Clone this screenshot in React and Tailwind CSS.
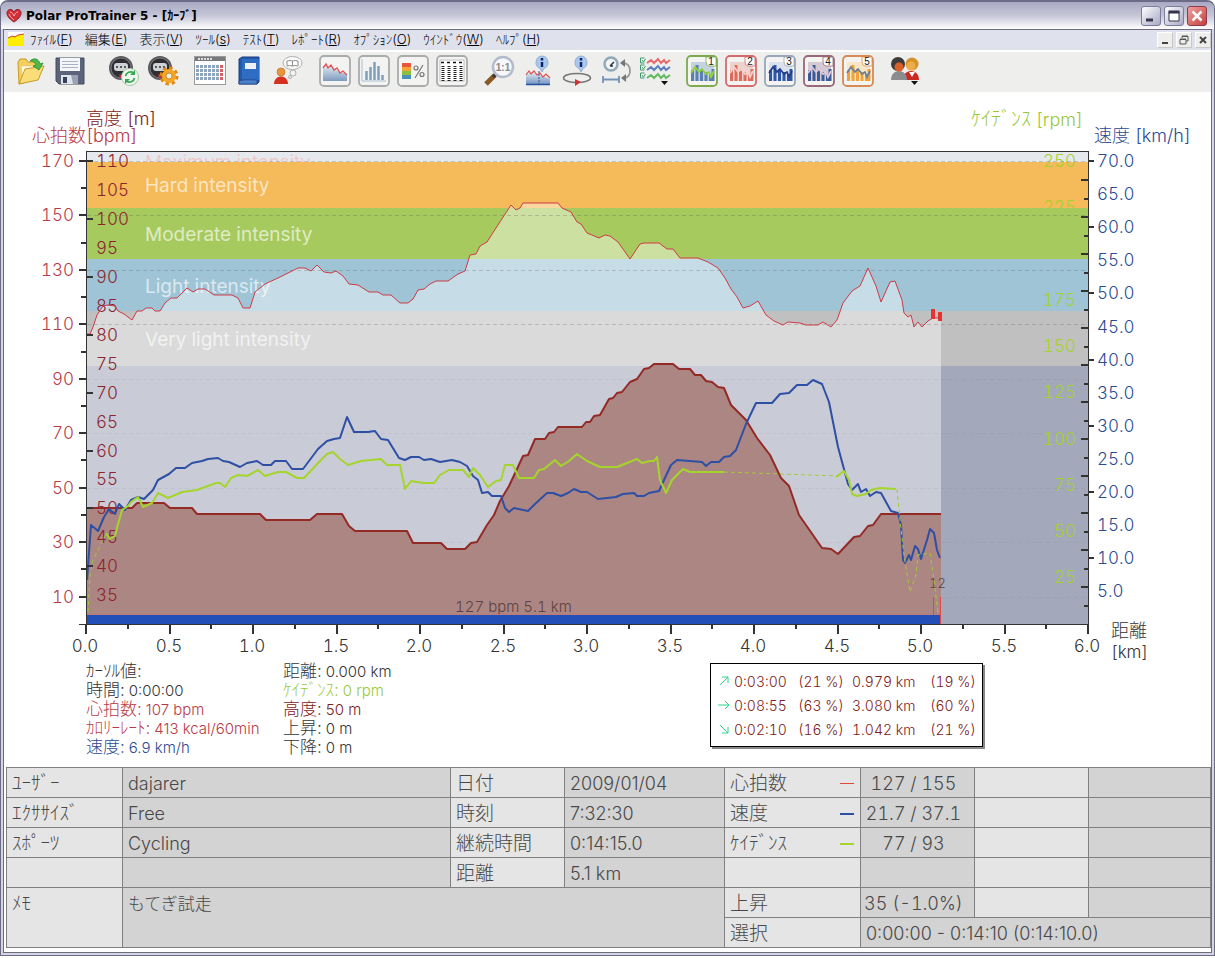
import { useId } from "react";

const menuItems = [
  { label: "ﾌｧｲﾙ", hotkey: "F" },
  { label: "編集", hotkey: "E" },
  { label: "表示", hotkey: "V" },
  { label: "ﾂｰﾙ", hotkey: "s" },
  { label: "ﾃｽﾄ", hotkey: "T" },
  { label: "ﾚﾎﾟｰﾄ", hotkey: "R" },
  { label: "ｵﾌﾟｼｮﾝ", hotkey: "O" },
  { label: "ｳｲﾝﾄﾞｳ", hotkey: "W" },
  { label: "ﾍﾙﾌﾟ", hotkey: "H" },
];

/* ---------- toolbar icons ---------- */

const OpenIcon = () => (
  <svg viewBox="0 0 32 32" className="w-8 h-8">
    <path d="M3 7l2-3h6l2 3h10v5l-14 16-5 1z" fill="#f3cf5c" stroke="#c79a26" />
    <path d="M6 11h17v8l-15 9z" fill="#fffbe6" stroke="#d9c47c" strokeWidth=".7" />
    <path d="M10 14l19-3-6 14L4 29z" fill="#f9dd78" stroke="#c79a26" />
    <path d="M15 6c4-4 9-2 10 3l3-1-4 7-6-4 3-1c-1-3-3-4-6-4z" fill="#4fb848" stroke="#2b8a2b" strokeWidth=".8" />
  </svg>
);

const SaveIcon = () => (
  <svg viewBox="0 0 32 32" className="w-8 h-8">
    <path d="M2 3h28v26H5l-3-3z" fill="#5b6478" stroke="#454d60" />
    <path d="M6 3h20v13H6z" fill="#f4f6fa" />
    <path d="M8 6.500h16M8 9.500h16M8 12.500h16" stroke="#a9b2c4" />
    <path d="M7 20h17v9H7z" fill="#dfe3ea" />
    <path d="M9 22h4v6H9z" fill="#39415a" />
    <path d="M17 20h7v9h-5z" fill="#9aa3b5" />
  </svg>
);

const WatchBase = () => (
  <>
    <circle cx="13" cy="13" r="12" fill="#5a5a5e" />
    <circle cx="13" cy="13" r="10" fill="#2f2f33" stroke="#77777c" />
    <rect x="6" y="8" width="14" height="8" rx="3" fill="#cfd3d6" />
    <path d="M8 12h2M12 12h2M16 12h2" stroke="#55595c" strokeWidth="2" />
    <path d="M11 19l6 3-5 1z" fill="#d03030" />
  </>
);

const WatchSyncIcon = () => (
  <svg viewBox="0 0 32 32" className="w-8 h-8">
    <WatchBase />
    <circle cx="22" cy="22" r="8.500" fill="#eef6ef" stroke="#a7c7ad" />
    <path d="M17.500 21a5 5 0 0 1 8-3" fill="none" stroke="#34a853" strokeWidth="1.800" />
    <path d="M27 15v5h-5z" fill="#34a853" />
    <path d="M26.500 23a5 5 0 0 1-8 3" fill="none" stroke="#34a853" strokeWidth="1.800" />
    <path d="M17 29v-5h5z" fill="#34a853" />
  </svg>
);

const WatchSettingsIcon = () => (
  <svg viewBox="0 0 32 32" className="w-8 h-8">
    <WatchBase />
    <circle cx="22" cy="21" r="7.500" fill="none" stroke="#e08a10" strokeWidth="4" strokeDasharray="3.200 2.690" />
    <circle cx="22" cy="21" r="5" fill="none" stroke="#f5a623" strokeWidth="4" />
    <circle cx="22" cy="21" r="3" fill="#efefed" stroke="#c77a0c" strokeWidth=".8" />
  </svg>
);

const calendarRows = [12, 16, 20, 24];
const calendarCols = [4, 8, 12, 16, 20, 24, 28];

const CalendarIcon = () => (
  <svg viewBox="0 0 32 32" className="w-8 h-8">
    <rect x=".5" y="1.500" width="31" height="28" fill="#fff" stroke="#9a9a9a" />
    <rect x="1" y="2" width="30" height="4" fill="#77797d" />
    <path d="M4 4h14" stroke="#fff" strokeWidth="1.500" strokeDasharray="2 1" />
    {calendarRows.map((y) =>
      calendarCols.map((x) => (
        <rect key={`${x}-${y}`} x={x - 2} y={y - 2} width="3" height="3" fill={x === 28 ? "#d96060" : "#8ea5be"} />
      ))
    )}
  </svg>
);

const BookIcon = () => (
  <svg viewBox="0 0 32 32" className="w-8 h-8">
    <path d="M6 4l3-2h17v25l-2 2H6z" fill="#2458a8" stroke="#1a3f80" />
    <path d="M9 4h17v21H9z" fill="#2f6cc4" />
    <path d="M6 26c4-2 12-1 18-1v4H6z" fill="#4a80cc" stroke="#1a3f80" strokeWidth=".7" />
    <rect x="12" y="8" width="11" height="6" fill="#eef2f8" />
  </svg>
);

const CoachIcon = () => (
  <svg viewBox="0 0 32 32" className="w-8 h-8">
    <ellipse cx="20.500" cy="8" rx="9.500" ry="6.500" fill="#fafafa" stroke="#b0b0b0" />
    <path d="M15 6q3-1 5.500 0 3-1 5.500 0v5q-3-1-5.500 0-3-1-5.500 0zM20.500 6v5" fill="#fff" stroke="#909090" />
    <circle cx="21" cy="18" r="3" fill="#f2f2f2" stroke="#b0b0b0" />
    <circle cx="18" cy="22" r="1.500" fill="#f2f2f2" stroke="#b0b0b0" />
    <circle cx="9" cy="17" r="4" fill="#e8963e" stroke="#b86a1e" strokeWidth=".6" />
    <path d="M2 29c0-10 14-10 14 0z" fill="#d6301f" />
  </svg>
);

const Framed = ({ color = "#a9abad", children }) => (
  <svg viewBox="0 0 32 32" className="w-8 h-8">
    <rect x="1" y="1" width="30" height="30" rx="4" fill="#f3f3f1" stroke={color} strokeWidth="1.800" />
    {children}
  </svg>
);

const CurveIcon = () => {
  const id = useId();
  return (
    <Framed>
      <defs>
        <linearGradient id={id} x1="0" y1="0" x2="0" y2="1">
          <stop offset="0" stopColor="#e3ebf3" />
          <stop offset="1" stopColor="#7d9cc0" />
        </linearGradient>
      </defs>
      <path d="M4 12l3-2 4 2 4 1 4 3 5 2 4 1v7H4z" fill={`url(#${id})`} />
      <path d="M4 13l3-4 2 4 3-3 3 5 3-2 3 5 3-2 4 4" fill="none" stroke="#e05050" strokeWidth="1.300" />
    </Framed>
  );
};

const DistributionIcon = () => (
  <Framed>
    <path d="M4 4v22h24" fill="none" stroke="#a9c0d4" />
    <path d="M8.500 25v-9M12.500 25V12M16.500 25V7M20.500 25V11M24.500 25v-5" stroke="#7f9fbf" strokeWidth="2.500" />
  </Framed>
);

const ZonesIcon = () => (
  <Framed>
    <rect x="5" y="8" width="9" height="4" fill="#e8553a" />
    <rect x="5" y="12" width="9" height="4" fill="#f3a536" />
    <rect x="5" y="16" width="9" height="4" fill="#8abf3f" />
    <rect x="5" y="20" width="9" height="4" fill="#4a90b8" />
    <g fill="none" stroke="#777" strokeWidth="1.200">
      <circle cx="19" cy="13" r="2" />
      <circle cx="25" cy="19.500" r="2" />
      <path d="M26 10l-8 13" />
    </g>
  </Framed>
);

const ListIcon = () => (
  <Framed>
    <rect x="4" y="5" width="24" height="21" fill="#fff" stroke="#aaa" strokeWidth=".7" />
    <path d="M5 7.500h22" stroke="#111" strokeWidth="1.500" strokeDasharray="3 3" />
    <path d="M7 11v15M13 11v15M19 11v15M25 11v15" stroke="#222" strokeWidth="3" strokeDasharray="1 1" />
  </Framed>
);

const ZoomIcon = () => (
  <svg viewBox="0 0 32 32" className="w-8 h-8">
    <path d="M3 29l9-9" stroke="#8a5a26" strokeWidth="5" />
    <path d="M10 22l3-3" stroke="#333" strokeWidth="3" />
    <circle cx="20" cy="12" r="10" fill="#f5f7fb" stroke="#b4bccb" strokeWidth="2.500" />
    <text x="20" y="16" textAnchor="middle" fontSize="10" fontFamily="Liberation Sans, sans-serif" fontWeight="bold" fill="#888">1:1</text>
  </svg>
);

const InfoBubble = () => (
  <>
    <path d="M17 1a6.500 6.500 0 0 1 2 12.500L17 17l-2-3.500A6.500 6.500 0 0 1 17 1z" fill="#a9c8ec" stroke="#7f9cc8" strokeWidth=".7" />
    <path d="M17 3v2.500M17 7v5" stroke="#14246c" strokeWidth="2.500" />
  </>
);

const CurveInfoIcon = () => {
  const id = useId();
  return (
    <svg viewBox="0 0 32 32" className="w-8 h-8">
      <defs>
        <linearGradient id={id} x1="0" y1="0" x2="0" y2="1">
          <stop offset="0" stopColor="#eef2f7" />
          <stop offset="1" stopColor="#6d90c0" />
        </linearGradient>
      </defs>
      <path d="M4 17l6-1 5 4 6 1 7 3v6H4z" fill={`url(#${id})`} />
      <path d="M4 29.500h24" stroke="#2a50a0" strokeWidth="1.500" />
      <path d="M4 20l3-4 2 3 3-3 3 4 3-2 3 4 3-3 4 4" fill="none" stroke="#e05050" strokeWidth="1.200" />
      <path d="M17 16v14" stroke="#2a50a0" strokeDasharray="2 1" />
      <g transform="translate(3 0)"><InfoBubble /></g>
    </svg>
  );
};

const LapInfoIcon = () => (
  <svg viewBox="0 0 32 32" className="w-8 h-8">
    <ellipse cx="16" cy="23" rx="13.500" ry="4.500" fill="none" stroke="#777" strokeWidth="1.500" />
    <path d="M14 24l6 3-6 4z" fill="#d03030" />
    <g transform="translate(3 0)"><InfoBubble /></g>
  </svg>
);

const TimeDistanceIcon = () => (
  <svg viewBox="0 0 32 32" className="w-8 h-8">
    <circle cx="11" cy="9" r="6.500" fill="#eef4f8" stroke="#8fa9b9" strokeWidth="2.500" />
    <path d="M10 11l4-4M10 11l3 0" stroke="#333" strokeWidth="1.500" />
    <path d="M3 21v7M19 21v7M3 24.500h16" stroke="#7094b8" strokeWidth="1.800" />
    <path d="M23 8c9 0 9 14 2 15" fill="none" stroke="#999" strokeWidth="1.800" />
    <path d="M25 4v8l-5-4zM26 19v8l-5-4z" fill="#777" />
  </svg>
);

const waves = [
  { y: 6, color: "#e86a6a" },
  { y: 13, color: "#5a7fc0" },
  { y: 21, color: "#62bb62" },
];

const SelectCurvesIcon = () => (
  <svg viewBox="0 0 32 32" className="w-8 h-8">
    {waves.map(({ y, color }) => (
      <g key={y} transform={`translate(0 ${y})`} fill="none">
        <path d="M1.500 -3v5h4M1.500 -3h4M3 -1l1.500 2 2-3" stroke="#3f9a70" />
        <path d="M8 2l4-3 3 3 4-4 3 4 3-3 2 3 4-3" stroke={color} strokeWidth="2" />
      </g>
    ))}
    <path d="M22 26h7l-3.500 4z" fill="#111" />
  </svg>
);

const FavouriteIcon = ({ number, frame, bar, line, sky }) => (
  <Framed color={frame}>
    <rect x="5" y="7" width="23" height="19" fill={sky} opacity=".55" />
    <path d="M6.500 26V15M11 26V10M15.500 26V14M20 26V17M24.500 26V19M27 26V14" stroke={bar} strokeWidth="3" />
    <path d="M5 18l4-6 4 5 3-3 4 5 3-2 2 5 3-6" fill="none" stroke={line} strokeWidth="1.800" />
    <path d="M20 2h10v9h-7q-3 0-3-4z" fill="#fdfdfd" stroke={frame} strokeWidth=".8" />
    <text x="25" y="10" textAnchor="middle" fontSize="10" fontFamily="Liberation Sans, sans-serif" fill="#222">{number}</text>
  </Framed>
);

const PeopleIcon = () => (
  <svg viewBox="0 0 32 32" className="w-8 h-8">
    <path d="M14 25c0-12 16-12 16 0z" fill="#c92a22" />
    <path d="M20 17l3 5 3-5z" fill="#fff" />
    <path d="M2 25c0-12 16-12 16 0z" fill="#8a8c8f" />
    <circle cx="23" cy="9" r="6.500" fill="#d4942a" />
    <circle cx="22" cy="11" r="4.500" fill="#f0ab4a" />
    <circle cx="9" cy="9" r="7" fill="#3c3c3c" />
    <circle cx="10" cy="12" r="4.500" fill="#d9622b" />
    <path d="M22 26h7l-3.500 4z" fill="#111" />
  </svg>
);

const toolGroups = [
  [
    { name: "開く", icon: <OpenIcon /> },
    { name: "保存", icon: <SaveIcon /> },
  ],
  [
    { name: "データ転送", icon: <WatchSyncIcon /> },
    { name: "機器の設定", icon: <WatchSettingsIcon /> },
  ],
  [
    { name: "カレンダー", icon: <CalendarIcon /> },
    { name: "日誌", icon: <BookIcon /> },
    { name: "コーチ", icon: <CoachIcon /> },
  ],
  [
    { name: "カーブ", icon: <CurveIcon /> },
    { name: "分布", icon: <DistributionIcon /> },
    { name: "ゾーン", icon: <ZonesIcon /> },
    { name: "リスト", icon: <ListIcon /> },
  ],
  [
    { name: "原寸", icon: <ZoomIcon /> },
    { name: "カーブ情報", icon: <CurveInfoIcon /> },
    { name: "ラップ情報", icon: <LapInfoIcon /> },
    { name: "時間/距離", icon: <TimeDistanceIcon /> },
    { name: "カーブ選択", icon: <SelectCurvesIcon /> },
  ],
  [
    { name: "お気に入り 1", icon: <FavouriteIcon number="1" frame="#7fa850" bar="#5b7fae" line="#8fd43a" sky="#9fb8d4" /> },
    { name: "お気に入り 2", icon: <FavouriteIcon number="2" frame="#d46a6a" bar="#dd6a5a" line="#f4d0c8" sky="#e8b8b0" /> },
    { name: "お気に入り 3", icon: <FavouriteIcon number="3" frame="#9aa6b8" bar="#2f55a8" line="#24408a" sky="#c4d2e8" /> },
    { name: "お気に入り 4", icon: <FavouriteIcon number="4" frame="#96687a" bar="#3a5a9a" line="#e0c8d4" sky="#b8a8bc" /> },
    { name: "お気に入り 5", icon: <FavouriteIcon number="5" frame="#d98a52" bar="#f0a23a" line="#6f7f98" sky="#f8dca8" /> },
  ],
  [{ name: "ユーザー", icon: <PeopleIcon /> }],
];

/* ---------- curve data ---------- */

const heartRate =
  "87,334 90,334 93,327 97,315 103,306 108,305 115,306 118,311 124,314 132,320 137,311 142,311 146,308 152,308 155,311 160,311 165,303 171,298 177,298 187,288 193,292 198,289 205,289 214,295 232,295 238,298 243,308 250,308 255,292 265,284 280,277 298,268 305,268 311,271 317,265 324,272 331,273 336,271 343,276 349,284 358,285 369,292 378,292 383,295 391,295 400,303 408,303 413,299 418,290 424,289 430,284 436,281 448,281 458,274 465,271 470,255 476,254 480,246 487,242 494,231 511,205 516,210 520,208 523,203 558,203 562,208 571,212 577,222 581,224 587,233 592,235 599,238 605,235 610,236 618,242 623,249 630,259 640,244 644,243 659,243 667,249 673,249 680,258 698,258 708,262 718,268 725,278 731,289 737,297 743,308 750,306 758,301 766,315 774,321 783,325 788,322 800,323 806,325 818,325 823,322 831,327 837,320 843,303 852,291 860,286 868,268 876,286 881,302 890,282 895,281 902,300 904,313 908,317 911,315 914,327 918,322 922,327 928,321 933,318 941,318";

const altitude =
  "87,508 132,508 137,503 164,503 170,508 192,508 197,514 260,514 266,520 310,520 317,514 342,514 349,526 355,531 407,531 413,543 441,543 447,549 465,549 471,543 477,542 487,525 494,515 500,501 509,486 517,469 523,456 528,455 535,439 545,439 549,433 554,432 558,427 582,427 586,422 590,422 594,416 600,415 609,399 613,398 617,393 622,392 630,382 637,379 644,369 649,368 654,364 673,364 679,369 690,369 695,375 701,375 706,381 712,382 718,387 724,388 731,405 746,420 757,438 770,455 781,478 789,486 799,515 822,548 831,549 838,554 854,537 860,536 868,526 873,525 881,514 941,514";

const speed =
  "87,580 91,525 98,531 104,517 109,509 115,514 119,504 125,510 131,500 138,497 144,499 153,490 158,480 169,474 176,468 185,468 192,463 202,461 208,459 218,458 223,461 229,462 240,467 247,463 257,461 263,465 271,465 275,461 286,461 292,469 303,469 318,449 327,441 334,439 340,438 347,417 354,432 368,432 375,431 381,439 388,440 399,458 405,460 411,457 419,457 424,460 431,459 440,462 452,460 460,462 467,466 473,476 478,480 482,493 488,492 492,496 501,496 505,508 509,512 514,508 528,511 535,504 547,493 553,493 561,496 568,493 574,489 581,492 587,492 598,499 616,497 623,494 634,493 637,496 644,496 649,493 659,491 664,480 671,465 677,460 702,462 706,466 711,462 719,462 724,457 730,456 736,450 746,424 756,403 772,403 780,394 789,393 797,385 807,385 813,380 822,384 829,402 838,447 848,484 852,490 858,484 861,492 866,489 870,496 876,492 881,493 891,511 898,513 901,525 903,560 905,563 909,555 911,560 915,546 918,549 921,559 927,540 930,529 934,533 937,550 940,558";

const cadence = [
  "106,533 110,539 115,536 117,528 122,510 128,506 131,502 138,497 143,507 152,503 158,493 168,498 175,495 182,492 197,490 205,487 216,483 220,483 225,487 231,478 238,475 247,476 258,470 265,476 278,472 286,472 297,478 304,478 321,460 327,454 333,452 340,459 348,465 361,461 381,459 387,465 400,465 405,489 411,481 423,483 434,483 440,475 449,470 463,470 469,477 473,468 480,475 488,487 496,481 501,480 505,465 513,465 519,478 534,478 539,470 544,469 555,460 561,466 569,461 577,454 587,461 600,467 617,467 637,459 642,463 650,461 654,461 657,457 660,480 666,493 672,480 683,469 690,472 724,472",
  "836,477 844,471 849,480 852,494 857,496 866,494 871,490 880,488 896,489",
];

// stretches where the cadence sensor was silent
const cadenceGaps = [
  "88,612 90,575 93,560 97,552 102,542 107,532",
  "724,472 780,474 838,476",
  "897,489 900,520 904,555 910,592 916,575 918,555 930,553 934,580 938,613",
];

const range = (n) => Array.from({ length: n }, (_, i) => i);

const hrY = (bpm) => Math.round(161 + (170 - bpm) * 2.722);
const altY = (m) => Math.round(161 + (110 - m) * 5.79);
const speedY = (kmh) => Math.round(161 + (70 - kmh) * 6.62);
const cadenceY = (rpm) => Math.round(161 + (250 - rpm) * 1.85);
const kmX = (km) => Math.round(86 + km * 167);

const CadenceLabel = ({ rpm }) => (
  <text x="1076" y={cadenceY(rpm) + 6} textAnchor="end" fill="#a4d22e">{rpm}</text>
);

const CurveChart = () => (
  <svg
    viewBox="4 92 1207 570"
    className="block w-full h-auto font-light tabular-nums"
    fontFamily="Inter, 'Noto Sans CJK JP', sans-serif"
    fontSize="17"
    role="img"
    aria-label="カーブ"
  >
    {/* Axis titles */}
    <g fontSize="18">
      <text x="86" y="125" fill="#7d2020">高度 [m]</text>
      <text x="32" y="142" fill="#b83a48">心拍数[bpm]</text>
      <text x="1083" y="126" textAnchor="end" fill="#96c83c"><tspan fontSize="20">ｹｲﾃﾞﾝｽ</tspan> [rpm]</text>
      <text x="1094" y="142" fill="#2c4a92">速度 [km/h]</text>
      <text x="1111" y="637" fill="#333">距離</text>
    </g>
    <text x="1111" y="658" fill="#333">[km]</text>

    {/* Intensity zones */}
    <rect x="87" y="151" width="1001" height="11" fill="#e5e9ee" shapeRendering="crispEdges" />
    <text x="145" y="169" fontSize="19" fill="#f0c4c4">Maximum intensity</text>
    <rect x="87" y="162" width="1001" height="46" fill="#f5ba5a" shapeRendering="crispEdges" />
    <CadenceLabel rpm={250} />
    <CadenceLabel rpm={225} />
    <g shapeRendering="crispEdges">
      <rect x="87" y="208" width="1001" height="51" fill="#a7ca5e" />
      <rect x="87" y="259" width="1001" height="52" fill="#9ec4d6" />
      <rect x="87" y="311" width="1001" height="55" fill="#c0c0c0" />
      <rect x="87" y="366" width="1001" height="258" fill="#a3a8bb" />
    </g>
    <g fill="#fff" fillOpacity=".65" fontSize="19" fontWeight="400">
      <text x="145" y="192">Hard intensity</text>
      <text x="145" y="241">Moderate intensity</text>
      <text x="145" y="293">Light intensity</text>
      <text x="145" y="346">Very light intensity</text>
    </g>

    <polygon points={`${heartRate} 941,624 87,624`} fill="#fff" fillOpacity=".42" />
    <g stroke="#555" strokeOpacity=".27" strokeDasharray="4 3" shapeRendering="crispEdges">
      {[170, 150, 130, 110].map((bpm) => (
        <path key={bpm} d={`M87 ${hrY(bpm)}.5H1088`} />
      ))}
    </g>
    <g stroke="#555" strokeOpacity=".07" strokeDasharray="4 3" shapeRendering="crispEdges">
      {[90, 70, 50, 30, 10].map((bpm) => (
        <path key={bpm} d={`M87 ${hrY(bpm)}.5H1088`} />
      ))}
    </g>
    <polygon points={`${altitude} 941,624 87,624`} fill="#ac8683" />

    {/* Labels inside the plot */}
    <g fill="#8c2430">
      {range(16).map((i) => (
        <text key={i} x="96" y={altY(110 - i * 5) + 6}>{110 - i * 5}</text>
      ))}
    </g>
    {[175, 150, 125, 100, 75, 50, 25].map((rpm) => (
      <CadenceLabel key={rpm} rpm={rpm} />
    ))}
    <g fill="#5c4242">
      <text x="455" y="612" fontSize="15">127 bpm 5.1 km</text>
      <text x="929" y="588" fontSize="13">12</text>
    </g>

    {/* Curves */}
    <g fill="none" strokeLinejoin="round">
      <polyline points={heartRate} stroke="#cf3a48" />
      <polyline points={altitude} stroke="#942a26" strokeWidth="2" />
      <polyline points={speed} stroke="#2f4fa4" strokeWidth="2" />
      {cadence.map((points) => (
        <polyline key={points} points={points} stroke="#a5d42c" strokeWidth="2" />
      ))}
      {cadenceGaps.map((points) => (
        <polyline key={points} points={points} stroke="#a5c83c" strokeDasharray="4 3" />
      ))}
    </g>
    <g shapeRendering="crispEdges">
      <rect x="931" y="309" width="4" height="10" fill="#e63232" />
      <rect x="938" y="312" width="4" height="9" fill="#e63232" />
      <rect x="87" y="614" width="854" height="1" fill="#c07a78" />
      <rect x="87" y="615" width="854" height="9" fill="#2350b8" />
      <path d="M933.500 597v18M940.500 597v27" stroke="#e04848" />
    </g>

    {/* Axes and ticks */}
    <g fill="none" stroke="#333" shapeRendering="crispEdges">
      <path d="M86 151.500H1088M86.500 151V625M1088.500 151V625M79 624.500H1089" />
      <g strokeWidth="2">
        {[170, 150, 130, 110, 90, 70, 50, 30, 10].map((bpm) => (
          <path key={bpm} d={`M79 ${hrY(bpm)}H87`} />
        ))}
        {[160, 140, 120, 100, 80, 60, 40, 20].map((bpm) => (
          <path key={bpm} d={`M81 ${hrY(bpm)}H87`} />
        ))}
        {[110, 100, 90, 80, 70, 60, 50, 40].map((m) => (
          <path key={m} d={`M87 ${altY(m)}H93`} />
        ))}
        {[70, 60, 50, 40, 30, 20, 10].map((kmh) => (
          <path key={kmh} d={`M1088 ${speedY(kmh)}H1094`} />
        ))}
        {range(24).map((i) => (
          <path key={i} d={`M${i % 2 === 0 ? 1081 : 1084} ${Math.round(180 + i * 18.5)}H1088`} />
        ))}
        {range(25).map((i) => (
          <path key={i} d={`M${kmX(i / 4)} 625V${i % 2 === 0 ? 634 : 629}`} />
        ))}
      </g>
    </g>

    {/* Outer axis labels */}
    <g textAnchor="end" fill="#b83a48">
      {[170, 150, 130, 110, 90, 70, 50, 30, 10].map((bpm) => (
        <text key={bpm} x="74" y={hrY(bpm) + 6}>{bpm}</text>
      ))}
    </g>
    <g fill="#2c4a92">
      {range(14).map((i) => (
        <text key={i} x="1097" y={speedY(70 - i * 5) + 6}>{(70 - i * 5).toFixed(1)}</text>
      ))}
    </g>
    <g textAnchor="middle" fill="#333">
      {range(13).map((i) => (
        <text key={i} x={kmX(i / 2) - 1} y="652">{(i / 2).toFixed(1)}</text>
      ))}
    </g>
  </svg>
);

/* ---------- window parts ---------- */

const TitleBar = () => (
  <header className="h-[27px] flex items-center justify-between pl-[5px] pr-[7px] bg-linear-to-b from-[#a9a9c4] via-[#c6c6d8] to-white">
    <h1 className="flex items-center gap-1 text-[12px] font-bold font-['DejaVu_Sans','Noto_Sans_CJK_JP',sans-serif] text-black">
      <svg viewBox="0 0 16 16" className="w-4 h-4">
        <path d="M8 14C2 10 1 7 1 5c0-4 5-5 7-1 2-4 7-3 7 1 0 2-1 5-7 9z" fill="#d43038" stroke="#8c1c24" />
        <path d="M3 6c1 3 4 5 5 6M4 4c2 0 3 2 4 4 1-2 2-4 4-4" fill="none" stroke="#f6b4b4" />
      </svg>
      Polar ProTrainer 5 - [ｶｰﾌﾞ]
    </h1>
    <div className="flex gap-[3px]">
      <button aria-label="最小化" className="w-5 h-5 rounded-[3px] border border-[#7c7c9c] bg-linear-to-br from-white to-[#a8a8c4]">
        <svg viewBox="0 0 18 18" className="w-full h-full"><path d="M4 13h7" stroke="#34344c" strokeWidth="3" /></svg>
      </button>
      <button aria-label="最大化" className="w-5 h-5 rounded-[3px] border border-[#7c7c9c] bg-linear-to-br from-white to-[#a8a8c4]">
        <svg viewBox="0 0 18 18" className="w-full h-full"><path d="M4 5h10v9H4z" fill="#fff" stroke="#34344c" /><path d="M3.500 5h11" stroke="#34344c" strokeWidth="3" /></svg>
      </button>
      <button aria-label="閉じる" className="w-5 h-5 rounded-[3px] border border-[#8c3c4c] bg-linear-to-br from-[#f0a0a0] to-[#c43c3c]">
        <svg viewBox="0 0 18 18" className="w-full h-full"><path d="M4.500 4.500l9 9M13.500 4.500l-9 9" stroke="#fff" strokeWidth="2.500" /></svg>
      </button>
    </div>
  </header>
);

const MenuBar = () => (
  <div className="h-5 flex items-center justify-between bg-[#dfe2ec]">
    <nav className="flex items-center text-[13px] leading-4 pb-0.5 text-black">
      <svg viewBox="0 0 16 14" className="w-4 h-3.5 ml-1">
        <path d="M0 0h16v14H0z" fill="#fff" />
        <path d="M0 6l4-2 3 1 3-2 6-1v12H0z" fill="#ffee00" />
        <path d="M0 6l4-2 3 1 3-2 6-1" fill="none" stroke="#d04020" />
      </svg>
      {menuItems.map((item) => (
        <button key={item.hotkey} className="px-1.5 whitespace-nowrap">
          {item.label}(<span className="underline">{item.hotkey}</span>)
        </button>
      ))}
    </nav>
    <div className="flex gap-[3px]">
      <button aria-label="子ウィンドウの最小化" className="w-4 h-4 bg-[#eeeeec] border border-white border-r-[#c8c8c8] border-b-[#c8c8c8]">
        <svg viewBox="0 0 14 14" className="w-full h-full"><path d="M4 10h6" stroke="#444" strokeWidth="2" /></svg>
      </button>
      <button aria-label="子ウィンドウを元に戻す" className="w-4 h-4 bg-[#eeeeec] border border-white border-r-[#c8c8c8] border-b-[#c8c8c8]">
        <svg viewBox="0 0 14 14" className="w-full h-full"><path d="M5 5V3.500h6V8H9.500M3 6.500h6V11H3zM5 3h6M3 6h6" fill="none" stroke="#555" /></svg>
      </button>
      <button aria-label="子ウィンドウを閉じる" className="w-4 h-4 bg-[#eeeeec] border border-white border-r-[#c8c8c8] border-b-[#c8c8c8]">
        <svg viewBox="0 0 14 14" className="w-full h-full"><path d="M4 4l6 6M10 4l-6 6" stroke="#444" strokeWidth="2" /></svg>
      </button>
    </div>
  </div>
);

const ToolBar = () => (
  <div className="h-[42px] pb-0.5 pl-[7px] flex items-center gap-2 bg-[#eeeeec] border-t-2 border-white">
    {toolGroups.map((tools, i) => (
      <div key={i} className="flex first:mr-[7px]">
        {tools.map((tool) => (
          <button key={tool.name} aria-label={tool.name} className="w-[39px] h-8 flex items-center justify-center">
            {tool.icon}
          </button>
        ))}
      </div>
    ))}
  </div>
);

const cursorLeft = [
  { label: "ｶｰｿﾙ値:", value: "", color: "text-[#333]" },
  { label: "時間:", value: "0:00:00", color: "text-[#333]" },
  { label: "心拍数:", value: "107 bpm", color: "text-[#b83a48]" },
  { label: "ｶﾛﾘｰﾚｰﾄ:", value: "413 kcal/60min", color: "text-[#b83a48]" },
  { label: "速度:", value: "6.9 km/h", color: "text-[#2c4a92]" },
];

const cursorRight = [
  { label: "距離:", value: "0.000 km", color: "text-[#333]" },
  { label: "ｹｲﾃﾞﾝｽ:", value: "0 rpm", color: "text-[#96c83c]" },
  { label: "高度:", value: "50 m", color: "text-[#7d2020]" },
  { label: "上昇:", value: "0 m", color: "text-[#333]" },
  { label: "下降:", value: "0 m", color: "text-[#333]" },
];

const CursorValues = ({ items }) => (
  <dl>
    {items.map((item) => (
      <div key={item.label} className={`flex items-center gap-1 h-[19px] whitespace-nowrap ${item.color}`}>
        <dt className="text-[17px] leading-[19px]">{item.label}</dt>
        <dd className="text-[15px] leading-[19px]">{item.value}</dd>
      </div>
    ))}
  </dl>
);

const slopes = [
  { arrow: "M3 11L11 3M5 3h6v6", name: "上り", time: "0:03:00", timeShare: "(21 %)", distance: "0.979 km", share: "(19 %)" },
  { arrow: "M1 7h11M8 3l4 4-4 4", name: "平地", time: "0:08:55", timeShare: "(63 %)", distance: "3.080 km", share: "(60 %)" },
  { arrow: "M3 3l8 8M11 5v6H5", name: "下り", time: "0:02:10", timeShare: "(16 %)", distance: "1.042 km", share: "(21 %)" },
];

const SlopeSummary = () => (
  <table className="border border-black shadow-[2px_2px_0_#888] text-[14px] tabular-nums text-[#7d2020] bg-white border-separate border-spacing-0 px-1.5 py-[5px]">
    <tbody>
      {slopes.map((row) => (
        <tr key={row.name} className="h-6">
          <th className="w-[17px] p-0">
            <svg viewBox="0 0 14 14" className="w-3.5 h-3.5" role="img" aria-label={row.name}>
              <path d={row.arrow} fill="none" stroke="#2fd48a" />
            </svg>
          </th>
          <td className="w-16 p-0">{row.time}</td>
          <td className="w-[54px] p-0">{row.timeShare}</td>
          <td className="w-[78px] p-0">{row.distance}</td>
          <td className="w-[46px] p-0">{row.share}</td>
        </tr>
      ))}
    </tbody>
  </table>
);

const Label = ({ children, ...rest }) => (
  <th scope="row" className="border border-[#808080] bg-[#e5e5e5] px-[5px] pt-0.5 pb-0 text-left align-top text-[19px] leading-[27px] font-light" {...rest}>
    {children}
  </th>
);

const Value = ({ children, ...rest }) => (
  <td className="border border-[#808080] bg-[#d3d3d3] px-[5px] pt-0.5 pb-0 align-top leading-[27px]" {...rest}>{children}</td>
);

const Stat = ({ children }) => (
  <td className="border border-[#808080] bg-[#d3d3d3] pr-2 pt-0.5 pb-0 text-center align-top leading-[27px] tabular-nums">{children}</td>
);

const CurveLabel = ({ name, children }) => (
  <Label>
    <span className="flex items-center justify-between pr-px">
      {name}
      {children}
    </span>
  </Label>
);

const SummaryTable = () => (
  <table className="w-full table-fixed border-collapse text-[18px] text-[#484848]">
    <colgroup>
      <col className="w-[116px]" />
      <col />
      <col className="w-[114px]" />
      <col className="w-[160px]" />
      <col className="w-[136px]" />
      <col className="w-[114px]" />
      <col className="w-[114px]" />
      <col className="w-[122px]" />
    </colgroup>
    <tbody>
      <tr className="h-[30px]">
        <Label>ﾕｰｻﾞｰ</Label>
        <Value>dajarer</Value>
        <Label>日付</Label>
        <Value>2009/01/04</Value>
        <CurveLabel name="心拍数"><span className="w-3.5 h-px bg-[#e04838]" /></CurveLabel>
        <Stat>127 / 155</Stat>
        <Label />
        <Value />
      </tr>
      <tr className="h-[30px]">
        <Label>ｴｸｻｻｲｽﾞ</Label>
        <Value>Free</Value>
        <Label>時刻</Label>
        <Value>7:32:30</Value>
        <CurveLabel name="速度"><span className="w-3.5 h-0.5 bg-[#2f4fa4]" /></CurveLabel>
        <Stat>21.7 / 37.1</Stat>
        <Label />
        <Value />
      </tr>
      <tr className="h-[30px]">
        <Label>ｽﾎﾟｰﾂ</Label>
        <Value>Cycling</Value>
        <Label>継続時間</Label>
        <Value>0:14:15.0</Value>
        <CurveLabel name="ｹｲﾃﾞﾝｽ"><span className="w-3.5 h-0.5 bg-[#a5d42c]" /></CurveLabel>
        <Stat>77 / 93</Stat>
        <Label />
        <Value />
      </tr>
      <tr className="h-[30px]">
        <Label />
        <Value />
        <Label>距離</Label>
        <Value>5.1 km</Value>
        <Label />
        <Value />
        <Label />
        <Value />
      </tr>
      <tr className="h-[30px]">
        <Label rowSpan={2}>ﾒﾓ</Label>
        <Value rowSpan={2} colSpan={3}><span className="text-[17px]">もてぎ試走</span></Value>
        <Label>上昇</Label>
        <Stat>35 (-1.0%)</Stat>
        <Label />
        <Value />
      </tr>
      <tr className="h-[30px]">
        <Label>選択</Label>
        <Value colSpan={3}>0:00:00 - 0:14:10 (0:14:10.0)</Value>
      </tr>
    </tbody>
  </table>
);

const App = () => {
  return (
    <div className="rounded-t-lg border border-t-2 border-[#6c6c88] bg-[#d4d4e2] font-['Inter','Noto_Sans_CJK_JP',sans-serif] font-light overflow-hidden">
      <TitleBar />
      <div className="px-0.5 pb-0.5">
        <div className="border border-[#6c6c80] bg-white">
          <MenuBar />
          <ToolBar />
          <main>
            <CurveChart />
            <section className="grid grid-cols-[197px_427px_auto] justify-start pl-[82px] pb-[10px]">
              <CursorValues items={cursorLeft} />
              <CursorValues items={cursorRight} />
              <div className="pt-px">
                <SlopeSummary />
              </div>
            </section>
            <div className="pl-0.5 pb-1">
              <SummaryTable />
            </div>
          </main>
        </div>
      </div>
    </div>
  );
};

export default App;
